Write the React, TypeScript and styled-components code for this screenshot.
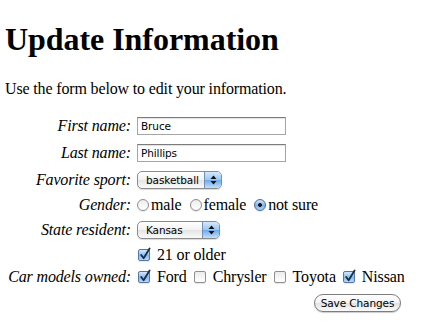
import React from "react";
import styled, { createGlobalStyle } from "styled-components";

const GlobalStyle = createGlobalStyle`
  html, body {
    margin: 0;
    padding: 0;
    background: #ffffff;
  }
  body {
    font-family: "Liberation Serif", "Times New Roman", serif;
    color: #000000;
    letter-spacing: -0.15px;
  }
`;

const Page = styled.div`
  padding: 0 5px;
`;

const Title = styled.h1`
  margin: 21px 0 0;
  font-size: 32px;
  font-weight: bold;
  line-height: 37px;
  letter-spacing: -0.05px;
`;

const Intro = styled.p`
  margin: 22px 0 0;
  font-size: 16px;
  line-height: 18px;
`;

const Form = styled.form`
  margin-top: 14px;
  margin-left: -5px;
  display: flex;
  flex-direction: column;
`;

const Row = styled.div<{ $h: number }>`
  display: grid;
  grid-template-columns: 131px 270px;
  column-gap: 6px;
  align-items: center;
  height: ${(p) => p.$h}px;
`;

const Label = styled.label`
  font-style: italic;
  font-size: 16px;
  text-align: right;
  white-space: nowrap;
`;

const Controls = styled.div<{ $end?: boolean }>`
  display: flex;
  align-items: center;
  justify-content: ${(p) => (p.$end ? "flex-end" : "flex-start")};
  font-size: 16px;
  white-space: nowrap;
`;

const TextInput = styled.input`
  box-sizing: border-box;
  width: 149px;
  height: 18px;
  margin: 0;
  padding: 1px 3px 0;
  border: 1px solid #a5a5a5;
  border-top-color: #7c7c7c;
  box-shadow: inset 0 1px 1px rgba(0, 0, 0, 0.12);
  font-family: "DejaVu Sans", "Lucida Grande", sans-serif;
  font-size: 10.5px;
  letter-spacing: -0.1px;
  color: #000;
  outline: none;
`;

const SelectBox = styled.div<{ $w: number }>`
  box-sizing: border-box;
  position: relative;
  width: ${(p) => p.$w}px;
  height: 18px;
  border: 1px solid #8b8b8b;
  border-radius: 5px;
  background: linear-gradient(#ffffff 0%, #f2f2f2 50%, #e4e4e4 51%, #fafafa 100%);
  box-shadow: 0 1px 1px rgba(0, 0, 0, 0.15);
  display: flex;
  align-items: center;
  padding-left: 8px;
  font-family: "DejaVu Sans", "Lucida Grande", sans-serif;
  font-size: 10.5px;
  letter-spacing: -0.1px;
  overflow: hidden;
`;

const SelectArrow = styled.span`
  position: absolute;
  top: 0;
  right: 0;
  bottom: 0;
  width: 16px;
  border-left: 1px solid #6f8fbf;
  background: linear-gradient(#d5e8fb 0%, #9cc6f3 50%, #6fa9ea 51%, #bfe0fd 100%);
  display: flex;
  align-items: center;
  justify-content: center;
`;

const RadioDot = styled.span<{ $on?: boolean }>`
  box-sizing: border-box;
  width: 12px;
  height: 12px;
  border-radius: 50%;
  border: 1px solid ${(p) => (p.$on ? "#4a6c9b" : "#8d8d8d")};
  background: ${(p) =>
    p.$on
      ? "radial-gradient(circle at 50% 50%, #1a1a1a 0 1.6px, transparent 2.2px), linear-gradient(#cfe5fb, #7fb4ec 55%, #a9d2fa)"
      : "linear-gradient(#ececec, #ffffff)"};
  box-shadow: 0 1px 1px rgba(0, 0, 0, 0.1);
  flex-shrink: 0;
`;

const RadioItem = styled.span`
  display: inline-flex;
  align-items: center;
  gap: 2px;
  margin-right: 8px;
`;

const CheckSquare = styled.span<{ $on?: boolean }>`
  box-sizing: border-box;
  position: relative;
  width: 12px;
  height: 12px;
  border-radius: 2px;
  border: 1px solid ${(p) => (p.$on ? "#5577a6" : "#8f8f8f")};
  background: ${(p) =>
    p.$on
      ? "linear-gradient(#d2e7fc, #88bbef 55%, #b3d8fb)"
      : "linear-gradient(#ececec, #ffffff)"};
  box-shadow: 0 1px 1px rgba(0, 0, 0, 0.1);
  flex-shrink: 0;

  svg {
    position: absolute;
    left: 0;
    top: -3px;
  }
`;

const CheckItem = styled.span`
  display: inline-flex;
  align-items: center;
  gap: 7px;
  margin-right: 6px;
  margin-left: 1px;
`;

const SaveButton = styled.button`
  box-sizing: border-box;
  width: 87px;
  height: 18px;
  margin: 0 6px 0 0;
  padding: 0;
  border: 1px solid #7d7d7d;
  border-radius: 9px;
  background: linear-gradient(#ffffff 0%, #f3f3f3 50%, #e2e2e2 51%, #fbfbfb 100%);
  box-shadow: 0 1px 1px rgba(0, 0, 0, 0.2);
  font-family: "DejaVu Sans", "Lucida Grande", sans-serif;
  font-size: 10.5px;
  letter-spacing: -0.1px;
  color: #000;
`;

const Arrows = () => (
  <svg width="7" height="10" viewBox="0 0 7 10">
    <path d="M3.5 0.5 L6.5 4 L0.5 4 Z" fill="#111" />
    <path d="M3.5 9.5 L6.5 6 L0.5 6 Z" fill="#111" />
  </svg>
);

const Select = ({ value, w }: { value: string; w: number }) => (
  <SelectBox $w={w}>
    {value}
    <SelectArrow>
      <Arrows />
    </SelectArrow>
  </SelectBox>
);

const Radio = ({ label, on }: { label: string; on?: boolean }) => (
  <RadioItem>
    <RadioDot $on={on} />
    {label}
  </RadioItem>
);

const Check = ({ label, on }: { label: string; on?: boolean }) => (
  <CheckItem>
    <CheckSquare $on={on}>
      {on && (
        <svg width="12" height="14" viewBox="0 0 12 14">
          <path
            d="M2.2 8 L4.6 11.2 L10.6 1.5"
            fill="none"
            stroke="#1c2c44"
            strokeWidth="1.8"
            strokeLinecap="round"
            strokeLinejoin="round"
          />
        </svg>
      )}
    </CheckSquare>
    {label}
  </CheckItem>
);

export default function App() {
  return (
    <>
      <GlobalStyle />
      <Page>
        <Title>Update Information</Title>
        <Intro>Use the form below to edit your information.</Intro>
        <Form onSubmit={(e) => e.preventDefault()}>
          <Row $h={27}>
            <Label>First name:</Label>
            <Controls>
              <TextInput defaultValue="Bruce" />
            </Controls>
          </Row>
          <Row $h={27}>
            <Label>Last name:</Label>
            <Controls>
              <TextInput defaultValue="Phillips" />
            </Controls>
          </Row>
          <Row $h={28}>
            <Label>Favorite sport:</Label>
            <Controls>
              <Select value="basketball" w={85} />
            </Controls>
          </Row>
          <Row $h={22}>
            <Label>Gender:</Label>
            <Controls>
              <Radio label="male" />
              <Radio label="female" />
              <Radio label="not sure" on />
            </Controls>
          </Row>
          <Row $h={27}>
            <Label>State resident:</Label>
            <Controls>
              <Select value="Kansas" w={83} />
            </Controls>
          </Row>
          <Row $h={24}>
            <span />
            <Controls>
              <Check label="21 or older" on />
            </Controls>
          </Row>
          <Row $h={20}>
            <Label>Car models owned:</Label>
            <Controls>
              <Check label="Ford" on />
              <Check label="Chrysler" />
              <Check label="Toyota" />
              <Check label="Nissan" on />
            </Controls>
          </Row>
          <Row $h={32}>
            <span />
            <Controls $end>
              <SaveButton type="submit">Save Changes</SaveButton>
            </Controls>
          </Row>
        </Form>
      </Page>
    </>
  );
}
